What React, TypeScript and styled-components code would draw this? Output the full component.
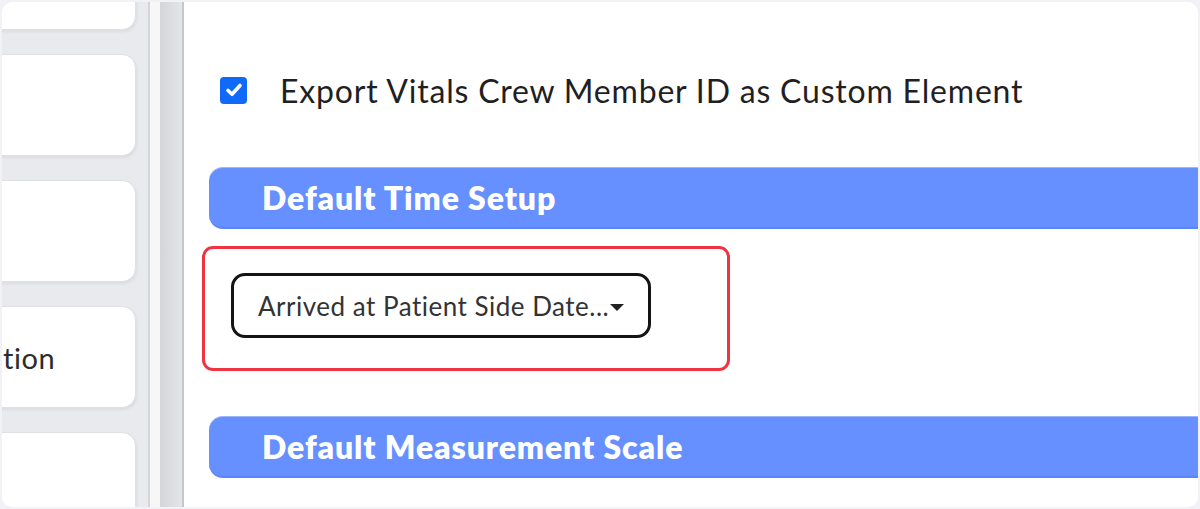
import styled, { createGlobalStyle } from "styled-components";

const GlobalStyle = createGlobalStyle`
  html, body {
    margin: 0;
    padding: 0;
    background: #f2f2f6;
  }
  body {
    font-family: "Lato", "Liberation Sans", sans-serif;
  }
`;

const Frame = styled.div`
  width: 1200px;
  height: 509px;
  box-sizing: border-box;
  padding: 2px;
  background: #f2f2f6;
`;

const Window = styled.div`
  display: flex;
  height: 100%;
  border-radius: 10px;
  overflow: hidden;
  background: #fff;
`;

const Sidebar = styled.aside`
  width: 146px;
  flex-shrink: 0;
  background: #e9eaee;
  overflow: hidden;
`;

// list is scrolled, so the first card is only partly visible
const CardList = styled.div`
  display: flex;
  flex-direction: column;
  gap: 24px;
  margin-top: -74px;
`;

const NavCard = styled.div`
  height: 102px;
  margin-left: -30px;
  width: 164px;
  box-sizing: border-box;
  display: flex;
  align-items: center;
  padding-left: 30px;
  background: #fff;
  border: 1px solid #dfe0e4;
  border-radius: 14px;
  box-shadow: 1px 2px 3px rgba(0, 0, 0, 0.06);
  font-size: 29px;
  letter-spacing: 0.6px;
  color: #2c2c2c;
`;

const Splitter = styled.div`
  width: 36px;
  flex-shrink: 0;
  box-sizing: border-box;
  border-left: 2px solid #d4d5d9;
  border-right: 2px solid #c6c7cb;
  background: linear-gradient(
    to right,
    #f7f7f8 0px,
    #f7f7f8 10px,
    #d4d5d9 10px,
    #e4e5e8 32px
  );
`;

const Content = styled.main`
  flex: 1;
  display: flex;
  flex-direction: column;
  padding-left: 18px;
`;

const CheckRow = styled.label`
  display: flex;
  align-items: center;
  gap: 33px;
  height: 50px;
  margin-top: 63px;
  margin-bottom: 2px;
  padding-left: 18px;
  font-size: 32px;
  letter-spacing: 0.8px;
  color: #1f1f24;
`;

const CheckBox = styled.span`
  width: 27px;
  height: 27px;
  flex-shrink: 0;
  border-radius: 4px;
  background: #0f6bf7;
  display: flex;
  align-items: center;
  justify-content: center;
`;

const SectionBar = styled.div<{ $gap: number }>`
  margin-top: ${(p) => p.$gap}px;
  margin-left: 7px;
  height: 62px;
  box-sizing: border-box;
  display: flex;
  align-items: center;
  padding-left: 53px;
  background: #668fff;
  border-top: 1px solid #9db5ff;
  border-bottom: 2px solid #5a85ff;
  border-radius: 14px 0 0 14px;
  color: #fff;
  font-size: 32px;
  letter-spacing: 0.9px;
  font-weight: 800;
`;

const Highlight = styled.div`
  margin-top: 17px;
  width: 528px;
  height: 125px;
  box-sizing: border-box;
  border: 3px solid #ef3340;
  border-radius: 11px;
  padding: 24px 0 0 26px;
`;

const Select = styled.div`
  width: 420px;
  height: 65px;
  box-sizing: border-box;
  border: 3px solid #141414;
  border-radius: 14px;
  display: flex;
  align-items: center;
  padding-left: 24px;
  font-size: 26px;
  letter-spacing: 0.5px;
  color: #333;
`;

const Caret = styled.span`
  width: 0;
  height: 0;
  margin-left: 1px;
  margin-top: 3px;
  border-left: 7px solid transparent;
  border-right: 7px solid transparent;
  border-top: 7px solid #222;
`;

const App = () => {
  return (
    <>
      <GlobalStyle />
      <Frame>
        <Window>
          <Sidebar>
            <CardList>
              <NavCard />
              <NavCard />
              <NavCard />
              <NavCard>tion</NavCard>
              <NavCard />
            </CardList>
          </Sidebar>
          <Splitter />
          <Content>
            <CheckRow>
              <CheckBox>
                <svg width="20" height="20" viewBox="0 0 20 20">
                  <path
                    d="M4 10.5 L8 14.3 L16 5.5"
                    fill="none"
                    stroke="#fff"
                    strokeWidth="3.6"
                    strokeLinecap="round"
                    strokeLinejoin="round"
                  />
                </svg>
              </CheckBox>
              Export Vitals Crew Member ID as Custom Element
            </CheckRow>
            <SectionBar $gap={50}>Default Time Setup</SectionBar>
            <Highlight>
              <Select>
                Arrived at Patient Side Date...
                <Caret />
              </Select>
            </Highlight>
            <SectionBar $gap={45}>Default Measurement Scale</SectionBar>
          </Content>
        </Window>
      </Frame>
    </>
  );
};

export default App;
